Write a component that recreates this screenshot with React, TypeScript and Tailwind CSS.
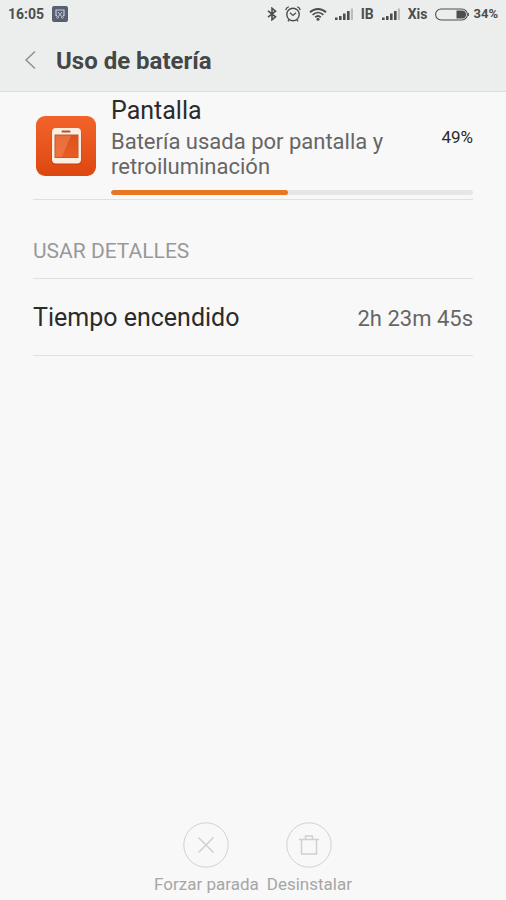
import type { ReactNode } from 'react';

const usage = {
    name: 'Pantalla',
    description: 'Batería usada por pantalla y retroiluminación',
    percent: 49,
};

const details = [{ label: 'Tiempo encendido', value: '2h 23m 45s' }];

function ScreenshotIcon() {
    return (
        <svg className="w-4 h-4" viewBox="0 0 16 16" fill="none" aria-hidden="true">
            <rect width="16" height="16" rx="2" fill="#56606f" />
            <path d="M5 9.500H4V4h8v5.500h-1" stroke="#c5cddb" strokeWidth="1.200" />
            <path d="M6 6l3.700 4.500M10 6l-3.700 4.500" stroke="#c5cddb" />
            <circle cx="5.600" cy="11.300" r="1" stroke="#c5cddb" strokeWidth="0.800" />
            <circle cx="10.400" cy="11.300" r="1" stroke="#c5cddb" strokeWidth="0.800" />
        </svg>
    );
}

function BluetoothIcon() {
    return (
        <svg className="w-[10px] h-[14px]" viewBox="0 0 10 14" fill="none" stroke="#4c4e4e" strokeWidth="1.600" aria-hidden="true">
            <path d="M1 3.800l7.500 6L5 12.800V1.200l3.500 3L1 10.200" />
        </svg>
    );
}

function AlarmIcon() {
    return (
        <svg className="w-4 h-4" viewBox="0 0 16 16" fill="none" stroke="#4c4e4e" aria-hidden="true">
            <circle cx="8" cy="8.500" r="6.200" strokeWidth="1.400" />
            <path d="M5 6.800l3 2.700 3-2.700" strokeWidth="1.300" />
            <path d="M.8 4C1.100 2.500 2.300 1.200 3.800.9M15.200 4c-.3-1.500-1.500-2.800-3-3.100M4 13.800l-1 1.500M12 13.800l1 1.500" strokeWidth="1.400" />
        </svg>
    );
}

function WifiIcon() {
    return (
        <svg className="w-[18px] h-[14px]" viewBox="0 0 18 14" fill="none" stroke="#4c4e4e" strokeWidth="1.900" aria-hidden="true">
            <path d="M1 5.300c4.600-4.400 11.400-4.400 16 0M3.600 7.900c3.200-3 7.600-3 10.800 0M6.200 10.300c1.700-1.500 3.900-1.500 5.600 0" />
            <circle cx="9" cy="12.200" r="1.500" fill="#4c4e4e" stroke="none" />
        </svg>
    );
}

function SignalIcon() {
    return (
        <svg className="w-[18px] h-3" viewBox="0 0 18 12" fill="#4c4e4e" aria-hidden="true">
            <rect x="0" y="9.500" width="2.600" height="2.500" />
            <rect x="4" y="8" width="2.600" height="4" />
            <rect x="8" y="5.500" width="2.600" height="6.500" />
            <rect x="12" y="3" width="2.600" height="9" />
            <rect x="15.800" y="0.500" width="2.200" height="11.500" fill="#bcbebe" />
        </svg>
    );
}

function BatteryIcon() {
    return (
        <svg className="w-[34px] h-[13px]" viewBox="0 0 34 13" fill="none" aria-hidden="true">
            <rect x="0.600" y="1" width="31.800" height="11" rx="5.500" stroke="#4c4e4e" strokeWidth="1.100" />
            <path d="M21.500 2.500H27a4 4 0 0 1 0 8h-5.500z" fill="#4c4e4e" />
            <path d="M33.400 5v3" stroke="#4c4e4e" />
        </svg>
    );
}

function ScreenAppIcon() {
    return (
        <svg className="w-[60px] h-[60px] shrink-0" viewBox="0 0 60 60" aria-hidden="true">
            <defs>
                <linearGradient id="tile" x1="0" y1="0" x2="0" y2="1">
                    <stop offset="0" stopColor="#f2642a" />
                    <stop offset="1" stopColor="#dd4710" />
                </linearGradient>
                <linearGradient id="glass" x1="0" y1="0" x2="0" y2="1">
                    <stop offset="0" stopColor="#d9531f" />
                    <stop offset="1" stopColor="#ea5c22" />
                </linearGradient>
            </defs>
            <rect width="60" height="60" rx="9" fill="url(#tile)" />
            <rect x="15.500" y="13" width="30" height="36" rx="4" fill="#b93a0c" opacity="0.450" />
            <rect x="16" y="12" width="29" height="35.500" rx="4" fill="#fdeee2" />
            <rect x="25.500" y="14.500" width="9" height="2" rx="1" fill="#b5502a" />
            <rect x="19" y="19" width="23" height="22.500" fill="url(#glass)" stroke="#c05a30" />
            <path d="M19.500 19.500h15.500L26 41h-6.500z" fill="#f58a5c" opacity="0.500" />
        </svg>
    );
}

function StatusBar() {
    return (
        <div className="flex h-7 items-center justify-between px-2 text-sm font-bold text-[#4c4e4e]">
            <div className="flex items-center gap-2">
                <span>16:05</span>
                <ScreenshotIcon />
            </div>
            <div className="flex items-center gap-2">
                <BluetoothIcon />
                <AlarmIcon />
                <WifiIcon />
                <SignalIcon />
                <span>IB</span>
                <SignalIcon />
                <span>Xis</span>
                <div className="flex items-center gap-1 text-[13px]">
                    <BatteryIcon />
                    <span>34%</span>
                </div>
            </div>
        </div>
    );
}

function ActionButton({ label, children }: { label: string; children: ReactNode }) {
    return (
        <button type="button" disabled className="flex flex-col items-center gap-1 text-[17px] leading-6 text-[#a6a6a6]">
            <svg className="w-[46px] h-[46px]" viewBox="0 0 46 46" fill="none" stroke="#d0d0d0" aria-hidden="true">
                <circle cx="23" cy="23" r="22.200" />
                {children}
            </svg>
            {label}
        </button>
    );
}

export default function App() {
    return (
        <div className="flex min-h-screen flex-col bg-[#f8f8f8] font-[Roboto,sans-serif]">
            <header className="border-b border-[#dcdddd] bg-[#eceeee]">
                <StatusBar />
                <div className="flex h-[63px] items-center gap-5 pl-6">
                    <button type="button" aria-label="Atrás">
                        <svg className="w-3 h-5" viewBox="0 0 12 20" fill="none" stroke="#8e9090" strokeWidth="1.500">
                            <path d="M11 1.500L2 10l9 8.500" />
                        </svg>
                    </button>
                    <h1 className="pt-0.5 text-2xl font-bold text-[#454747]">Uso de batería</h1>
                </div>
            </header>

            <main className="flex-1 px-[33px]">
                {/* App usage */}
                <section className="flex items-center gap-[15px] border-b border-[#e0e0e0] pb-1 pl-[3px]">
                    <div className="pt-1">
                        <ScreenAppIcon />
                    </div>
                    <div className="flex-1">
                        <div className="flex items-center justify-between">
                            <div>
                                <h2 className="text-[25px] leading-[37px] text-[#2b2b2b]">{usage.name}</h2>
                                <p className="max-w-[290px] text-[22px] leading-[25px] text-[#666]">{usage.description}</p>
                            </div>
                            <span className="pt-1 text-[17px] text-[#2b2b2b]">{usage.percent}%</span>
                        </div>
                        <div
                            role="progressbar"
                            aria-label={usage.name}
                            aria-valuenow={usage.percent}
                            className="mt-[11px] h-[5px] overflow-hidden rounded-sm bg-[#e6e6e6]"
                        >
                            <div className="h-full rounded-sm bg-[#e87722]" style={{ width: `${usage.percent}%` }} />
                        </div>
                    </div>
                </section>

                {/* Details */}
                <section>
                    <h2 className="border-b border-[#e0e0e0] pt-[34px] pb-[10px] text-[21px] leading-[34px] text-[#999]">USAR DETALLES</h2>
                    <dl>
                        {details.map((item) => (
                            <div key={item.label} className="flex h-[77px] items-center justify-between border-b border-[#e0e0e0] pt-0.5">
                                <dt className="text-[25px] text-[#2b2b2b]">{item.label}</dt>
                                <dd className="text-[22px] text-[#666]">{item.value}</dd>
                            </div>
                        ))}
                    </dl>
                </section>
            </main>

            <footer className="flex justify-center gap-2 pb-1">
                <ActionButton label="Forzar parada">
                    <path d="M15.500 15.500l15 15M30.500 15.500l-15 15" strokeWidth="1.500" />
                </ActionButton>
                <ActionButton label="Desinstalar">
                    <path d="M13 17.500h20M15.500 17.500V32h15V17.500M19.500 17v-3h7v3" strokeWidth="1.500" />
                </ActionButton>
            </footer>
        </div>
    );
}
